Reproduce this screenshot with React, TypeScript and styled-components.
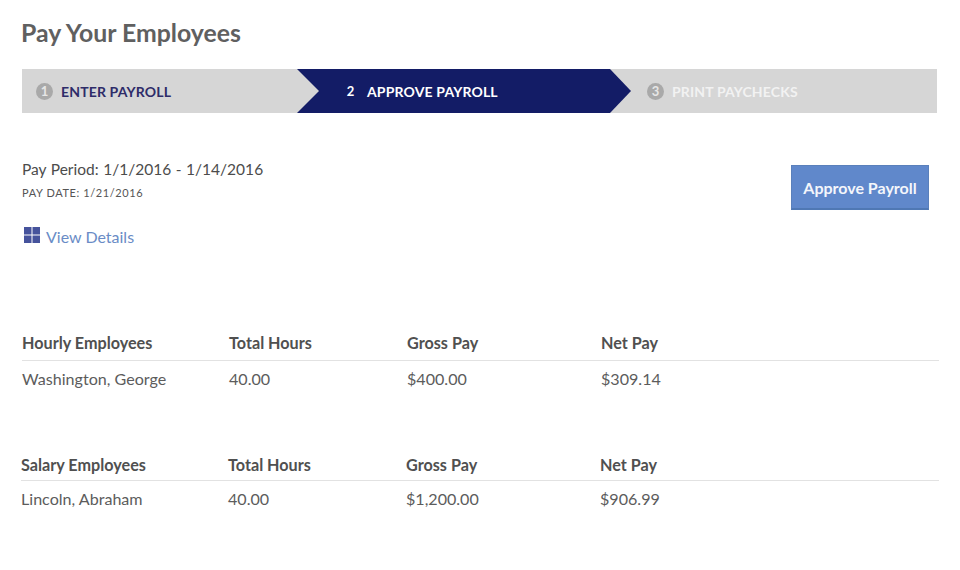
import React from "react";
import styled, { createGlobalStyle } from "styled-components";

const GlobalStyle = createGlobalStyle`
  html, body {
    margin: 0;
    padding: 0;
    background: #fff;
    font-family: Lato, "Liberation Sans", sans-serif;
  }
`;

const Page = styled.div`
  width: 960px;
  height: 570px;
  overflow: hidden;
  padding: 16px 22px 0;
  box-sizing: border-box;
`;

const Title = styled.h1`
  margin: 0 0 20px -1px;
  font-size: 24.8px;
  line-height: 33px;
  font-weight: 700;
  color: #606060;
`;

const Steps = styled.div`
  width: 915px;
  height: 44px;
  display: flex;
  background: #d6d6d6;
`;

const Step = styled.div<{ $width: number; $pad: number; $active?: boolean }>`
  position: relative;
  width: ${(p) => p.$width}px;
  padding-left: ${(p) => p.$pad}px;
  box-sizing: border-box;
  display: flex;
  align-items: center;
  gap: 8px;
  background: ${(p) => (p.$active ? "#131c66" : "transparent")};
  &::before {
    content: "";
    display: ${(p) => (p.$active ? "block" : "none")};
    position: absolute;
    left: 0;
    top: 0;
    border-style: solid;
    border-width: 22px 0 22px 22px;
    border-color: transparent transparent transparent #d6d6d6;
  }
  &::after {
    content: "";
    display: ${(p) => (p.$active ? "block" : "none")};
    position: absolute;
    right: -21px;
    top: 0;
    border-style: solid;
    border-width: 22px 0 22px 21px;
    border-color: transparent transparent transparent #131c66;
  }
`;

const StepNumber = styled.span<{ $active?: boolean }>`
  width: 17px;
  height: 17px;
  border-radius: 50%;
  display: flex;
  align-items: center;
  justify-content: center;
  font-size: 13px;
  font-weight: 700;
  color: ${(p) => (p.$active ? "#fff" : "#e6e6e6")};
  background: ${(p) => (p.$active ? "transparent" : "#a9a9a9")};
`;

const StepLabel = styled.span<{ $tone: string }>`
  font-size: 14px;
  font-weight: 700;
  letter-spacing: 0.15px;
  color: ${(p) => p.$tone};
`;

const Summary = styled.div`
  display: flex;
  justify-content: space-between;
  align-items: flex-start;
  padding: 46px 9px 0 0;
`;

const PeriodText = styled.div`
  font-size: 15.5px;
  line-height: 20px;
  color: #4c4c4c;
  letter-spacing: 0.02px;
  word-spacing: 0.5px;
`;

const DateText = styled.div`
  margin-top: 7px;
  font-size: 11px;
  line-height: 14px;
  color: #555;
  letter-spacing: 0.6px;
`;

const DetailsLink = styled.a`
  margin: 27px 0 0 2px;
  display: flex;
  align-items: center;
  gap: 6px;
  font-size: 16px;
  line-height: 20px;
  color: #6a8cc6;
  svg {
    margin-top: -4px;
  }
`;

const ApproveButton = styled.button`
  width: 138px;
  height: 45px;
  margin-top: 6px;
  border: 1px solid #5a80bb;
  border-bottom: 2px solid #4f78b4;
  background: #6088cb;
  color: #f4f6fb;
  font-family: inherit;
  font-size: 16px;
  font-weight: 700;
`;

const Section = styled.section<{ $top: number; $shift?: number }>`
  margin: ${(p) => p.$top}px -1px 0 ${(p) => p.$shift ?? 0}px;
`;

const Row = styled.div<{ $head?: boolean; $height: number }>`
  display: grid;
  grid-template-columns: 207px 178px 194px 1fr;
  align-items: center;
  height: ${(p) => p.$height}px;
  padding-bottom: ${(p) => (p.$head ? "2px" : "0")};
  font-size: ${(p) => (p.$head ? "16.2px" : "16.1px")};
  font-weight: ${(p) => (p.$head ? 700 : 400)};
  color: ${(p) => (p.$head ? "#505050" : "#5c5c5c")};
  border-bottom: ${(p) => (p.$head ? "1px solid #e2e2e2" : "none")};
`;

const groups = [
  { top: 79, shift: 0, headHeight: 32, title: "Hourly Employees", name: "Washington, George", hours: "40.00", gross: "$400.00", net: "$309.14" },
  { top: 54, shift: -1, headHeight: 28, title: "Salary Employees", name: "Lincoln, Abraham", hours: "40.00", gross: "$1,200.00", net: "$906.99" },
];

export default function App() {
  return (
    <Page>
      <GlobalStyle />
      <Title>Pay Your Employees</Title>
      <Steps>
        <Step $width={275} $pad={14}>
          <StepNumber>1</StepNumber>
          <StepLabel $tone="#2e2c69">ENTER PAYROLL</StepLabel>
        </Step>
        <Step $width={313} $pad={45} $active>
          <StepNumber $active>2</StepNumber>
          <StepLabel $tone="#fff">APPROVE PAYROLL</StepLabel>
        </Step>
        <Step $width={327} $pad={37}>
          <StepNumber>3</StepNumber>
          <StepLabel $tone="#f2f2f2">PRINT PAYCHECKS</StepLabel>
        </Step>
      </Steps>
      <Summary>
        <div>
          <PeriodText>Pay Period: 1/1/2016 - 1/14/2016</PeriodText>
          <DateText>PAY DATE: 1/21/2016</DateText>
          <DetailsLink>
            <svg width="16" height="16" viewBox="0 0 16 16" fill="#46539c">
              <rect x="0" y="0" width="7.5" height="7.5" />
              <rect x="8.5" y="0" width="7.5" height="7.5" />
              <rect x="0" y="8.5" width="7.5" height="7.5" />
              <rect x="8.5" y="8.5" width="7.5" height="7.5" />
            </svg>
            View Details
          </DetailsLink>
        </div>
        <ApproveButton>Approve Payroll</ApproveButton>
      </Summary>
      {groups.map((g) => (
        <Section key={g.title} $top={g.top} $shift={g.shift}>
          <Row $head $height={g.headHeight}>
            <span>{g.title}</span>
            <span>Total Hours</span>
            <span>Gross Pay</span>
            <span>Net Pay</span>
          </Row>
          <Row $height={35}>
            <span>{g.name}</span>
            <span>{g.hours}</span>
            <span>{g.gross}</span>
            <span>{g.net}</span>
          </Row>
        </Section>
      ))}
    </Page>
  );
}
